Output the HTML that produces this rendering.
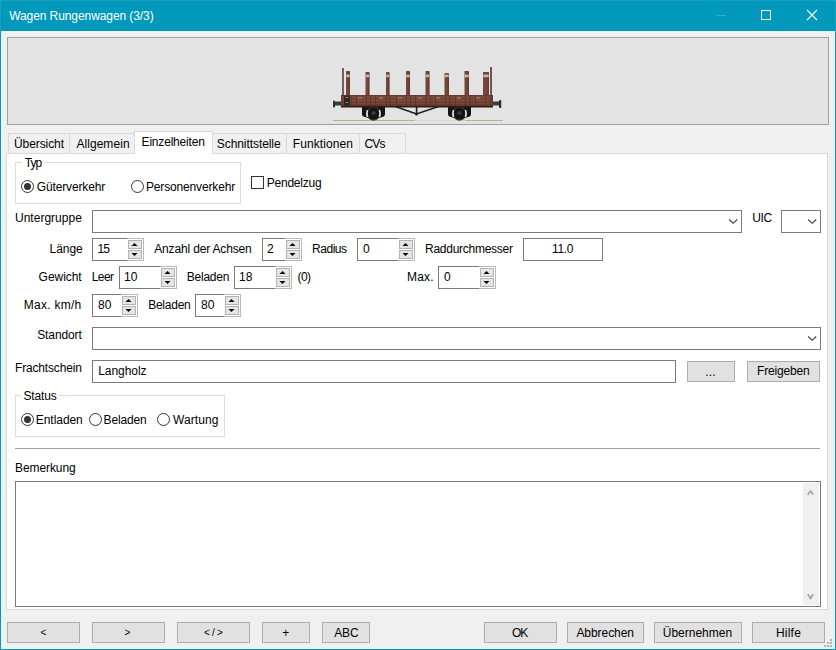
<!DOCTYPE html>
<html><head><meta charset="utf-8"><style>
html,body{margin:0;padding:0;width:836px;height:650px;overflow:hidden;background:#f0f0f0;}
</style></head><body>
<div style="position:absolute;left:0px;top:0px;width:836px;height:650px;background:#f0f0f0;"></div>
<div style="position:absolute;left:0px;top:0px;width:836px;height:31px;background:#0099bc;"></div>
<div style="position:absolute;left:0px;top:31px;width:1px;height:619px;background:#0099bc;"></div>
<div style="position:absolute;left:835px;top:31px;width:1px;height:619px;background:#0099bc;"></div>
<div style="position:absolute;left:0px;top:649px;width:836px;height:1px;background:#0099bc;"></div>
<div style="position:absolute;left:0px;top:0px;width:836px;height:1px;background:#17a0c0;"></div>
<div style="position:absolute;left:0px;top:0px;width:1px;height:31px;background:#17a0c0;"></div>
<div style="position:absolute;left:835px;top:0px;width:1px;height:31px;background:#17a0c0;"></div>
<div id="t0" style="position:absolute;top:9px;font:12px/14px 'Liberation Sans', sans-serif;color:#fff;white-space:nowrap;letter-spacing:-0.082px;left:9.2px;">Wagen Rungenwagen (3/3)</div>
<div style="position:absolute;left:716px;top:15px;width:10px;height:1px;background:#36accb;"></div>
<div style="position:absolute;left:761px;top:10px;width:10px;height:10px;box-sizing:border-box;border:1px solid #fff;"></div>
<svg style="position:absolute;left:806px;top:9px" width="12" height="12"><path d="M1,1 L11,11 M11,1 L1,11" stroke="#fff" stroke-width="1.1"/></svg>
<div style="position:absolute;left:7px;top:37px;width:822px;height:88px;box-sizing:border-box;background:#e3e3e3;border:1px solid #a0a0a0;"></div>
<svg style="position:absolute;left:0;top:0" width="836" height="130" viewBox="0 0 836 130"><rect x="333" y="120" width="170" height="1" fill="#c0b27e"/><rect x="415" y="120" width="50" height="1" fill="#dcd6c0"/><rect x="334" y="101.5" width="8" height="4" fill="#36403c"/><rect x="333" y="100.5" width="2" height="7" fill="#2c3431" rx="0.8"/><rect x="492" y="101.5" width="8" height="4" fill="#36403c"/><rect x="499" y="100" width="2.2" height="8" fill="#252c29" rx="0.8"/><path d="M362,106 H385 V114 Q385,116.5 382,117 L379,118 Q376.5,120.6 373.5,120.6 Q370.5,120.6 368,118 L365,117 Q362,116.5 362,114 Z" fill="#141414"/><circle cx="373.5" cy="113.5" r="6.6" fill="none" stroke="#5e5a50" stroke-width="0.7"/><path d="M367.5,110 Q366.3,113.5 367.5,117" fill="none" stroke="#e4e2ea" stroke-width="1.6"/><path d="M379.5,110 Q380.7,113.5 379.5,117" fill="none" stroke="#e4e2ea" stroke-width="1.6"/><rect x="371.5" y="111.5" width="4" height="3" fill="#3c3e42"/><path d="M448,106 H471 V114 Q471,116.5 468,117 L465,118 Q462.5,120.6 459.5,120.6 Q456.5,120.6 454,118 L451,117 Q448,116.5 448,114 Z" fill="#141414"/><circle cx="459.5" cy="113.5" r="6.6" fill="none" stroke="#5e5a50" stroke-width="0.7"/><path d="M453.5,110 Q452.3,113.5 453.5,117" fill="none" stroke="#e4e2ea" stroke-width="1.6"/><path d="M465.5,110 Q466.7,113.5 465.5,117" fill="none" stroke="#e4e2ea" stroke-width="1.6"/><rect x="457.5" y="111.5" width="4" height="3" fill="#3c3e42"/><polyline points="394,106 416.5,114 440,106" fill="none" stroke="#1c1c1c" stroke-width="1.4"/><rect x="415.8" y="106" width="1.6" height="8" fill="#1c1c1c"/><circle cx="416.5" cy="114" r="1.5" fill="#1c1c1c"/><rect x="341" y="105.5" width="152" height="2" fill="#2b1d18"/><rect x="341" y="95" width="152" height="11" fill="#784738"/><rect x="341" y="95" width="152" height="1" fill="#6a3c30"/><rect x="341" y="102" width="152" height="1" fill="#663a2e"/><rect x="341" y="104.5" width="152" height="1.2" fill="#5a3226"/><rect x="341.5" y="95" width="1" height="11" fill="#50302a" opacity="0.6"/><rect x="351" y="95" width="1" height="11" fill="#50302a" opacity="0.6"/><rect x="356" y="95" width="1" height="11" fill="#50302a" opacity="0.6"/><rect x="366" y="95" width="1" height="11" fill="#50302a" opacity="0.6"/><rect x="370" y="95" width="1" height="11" fill="#50302a" opacity="0.6"/><rect x="375" y="95" width="1" height="11" fill="#50302a" opacity="0.6"/><rect x="386" y="95" width="1" height="11" fill="#50302a" opacity="0.6"/><rect x="389.5" y="95" width="1" height="11" fill="#50302a" opacity="0.6"/><rect x="396" y="95" width="1" height="11" fill="#50302a" opacity="0.6"/><rect x="406" y="95" width="1" height="11" fill="#50302a" opacity="0.6"/><rect x="410" y="95" width="1" height="11" fill="#50302a" opacity="0.6"/><rect x="415" y="95" width="1" height="11" fill="#50302a" opacity="0.6"/><rect x="425.5" y="95" width="1" height="11" fill="#50302a" opacity="0.6"/><rect x="430" y="95" width="1" height="11" fill="#50302a" opacity="0.6"/><rect x="435" y="95" width="1" height="11" fill="#50302a" opacity="0.6"/><rect x="445" y="95" width="1" height="11" fill="#50302a" opacity="0.6"/><rect x="449.5" y="95" width="1" height="11" fill="#50302a" opacity="0.6"/><rect x="455" y="95" width="1" height="11" fill="#50302a" opacity="0.6"/><rect x="465" y="95" width="1" height="11" fill="#50302a" opacity="0.6"/><rect x="469.5" y="95" width="1" height="11" fill="#50302a" opacity="0.6"/><rect x="475" y="95" width="1" height="11" fill="#50302a" opacity="0.6"/><rect x="485" y="95" width="1" height="11" fill="#50302a" opacity="0.6"/><rect x="490" y="95" width="1" height="11" fill="#50302a" opacity="0.6"/><rect x="492" y="95" width="1" height="11" fill="#50302a" opacity="0.6"/><rect x="358" y="97" width="4" height="1.5" fill="#b8a098" opacity="0.5"/><rect x="379" y="97" width="4" height="1.5" fill="#b8a098" opacity="0.5"/><rect x="398" y="97" width="4" height="1.5" fill="#b8a098" opacity="0.5"/><rect x="418" y="97" width="4" height="1.5" fill="#b8a098" opacity="0.5"/><rect x="436" y="97" width="4" height="1.5" fill="#b8a098" opacity="0.5"/><rect x="457" y="97" width="4" height="1.5" fill="#b8a098" opacity="0.5"/><rect x="476" y="97" width="4" height="1.5" fill="#b8a098" opacity="0.5"/><rect x="344" y="95.5" width="6" height="10" fill="#2e2624"/><rect x="345.5" y="97" width="3" height="1" fill="#8a8a8a"/><rect x="345.5" y="102" width="3" height="1" fill="#7a7a7a"/><rect x="342" y="68" width="2" height="27" fill="#765e56"/><rect x="490" y="67" width="2" height="28" fill="#70564c"/><rect x="346" y="71" width="4" height="24" fill="#74453a" rx="0.6"/><rect x="348.8" y="72" width="1" height="23" fill="#5e362e" opacity="0.8"/><rect x="346.3" y="74.6" width="3.4" height="2.6" fill="#d2cccc" opacity="0.85"/><rect x="365.5" y="72" width="4" height="23" fill="#74453a" rx="0.6"/><rect x="368.3" y="73" width="1" height="22" fill="#5e362e" opacity="0.8"/><rect x="365.8" y="74.6" width="3.4" height="2.6" fill="#d2cccc" opacity="0.85"/><rect x="386" y="72" width="3.5" height="23" fill="#74453a" rx="0.6"/><rect x="388.3" y="73" width="1" height="22" fill="#5e362e" opacity="0.8"/><rect x="386.3" y="74.6" width="2.9" height="2.6" fill="#d2cccc" opacity="0.85"/><rect x="406" y="71" width="4" height="24" fill="#74453a" rx="0.6"/><rect x="408.8" y="72" width="1" height="23" fill="#5e362e" opacity="0.8"/><rect x="406.3" y="74.6" width="3.4" height="2.6" fill="#d2cccc" opacity="0.85"/><rect x="425.5" y="71" width="4" height="24" fill="#74453a" rx="0.6"/><rect x="428.3" y="72" width="1" height="23" fill="#5e362e" opacity="0.8"/><rect x="425.8" y="74.6" width="3.4" height="2.6" fill="#d2cccc" opacity="0.85"/><rect x="444.5" y="73" width="4.5" height="22" fill="#74453a" rx="0.6"/><rect x="447.8" y="74" width="1" height="21" fill="#5e362e" opacity="0.8"/><rect x="444.8" y="74.6" width="3.9" height="2.6" fill="#d2cccc" opacity="0.85"/><rect x="464.5" y="71" width="4.5" height="24" fill="#74453a" rx="0.6"/><rect x="467.8" y="72" width="1" height="23" fill="#5e362e" opacity="0.8"/><rect x="464.8" y="74.6" width="3.9" height="2.6" fill="#d2cccc" opacity="0.85"/><rect x="483" y="72" width="6" height="23" fill="#74453a" rx="0.6"/><rect x="487.8" y="73" width="1" height="22" fill="#5e362e" opacity="0.8"/><rect x="483.3" y="74.6" width="5.4" height="2.6" fill="#d2cccc" opacity="0.85"/></svg>
<div style="position:absolute;left:6px;top:153px;width:822px;height:457px;box-sizing:border-box;background:#fff;border:1px solid #d9d9d9;"></div>
<div style="position:absolute;left:8px;top:133px;width:62px;height:21px;box-sizing:border-box;background:#f0f0f0;border:1px solid #d9d9d9;"></div>
<div style="position:absolute;left:69px;top:133px;width:66px;height:21px;box-sizing:border-box;background:#f0f0f0;border:1px solid #d9d9d9;"></div>
<div style="position:absolute;left:212px;top:133px;width:75px;height:21px;box-sizing:border-box;background:#f0f0f0;border:1px solid #d9d9d9;"></div>
<div style="position:absolute;left:286px;top:133px;width:74px;height:21px;box-sizing:border-box;background:#f0f0f0;border:1px solid #d9d9d9;"></div>
<div style="position:absolute;left:359px;top:133px;width:47px;height:21px;box-sizing:border-box;background:#f0f0f0;border:1px solid #d9d9d9;"></div>
<div style="position:absolute;left:134px;top:131px;width:79px;height:23px;box-sizing:border-box;background:#fff;border:1px solid #d9d9d9;border-bottom:none;"></div>
<div id="t1" style="position:absolute;top:137px;font:12px/14px 'Liberation Sans', sans-serif;color:#000;white-space:nowrap;letter-spacing:-0.09px;left:14.0px;">Übersicht</div>
<div id="t2" style="position:absolute;top:137px;font:12px/14px 'Liberation Sans', sans-serif;color:#000;white-space:nowrap;letter-spacing:0.06px;left:76.4px;">Allgemein</div>
<div id="t3" style="position:absolute;top:135px;font:12px/14px 'Liberation Sans', sans-serif;color:#000;white-space:nowrap;letter-spacing:-0.195px;left:141.6px;">Einzelheiten</div>
<div id="t4" style="position:absolute;top:137px;font:12px/14px 'Liberation Sans', sans-serif;color:#000;white-space:nowrap;letter-spacing:-0.073px;left:216.8px;">Schnittstelle</div>
<div id="t5" style="position:absolute;top:137px;font:12px/14px 'Liberation Sans', sans-serif;color:#000;white-space:nowrap;letter-spacing:0.096px;left:292.8px;">Funktionen</div>
<div id="t6" style="position:absolute;top:137px;font:12px/14px 'Liberation Sans', sans-serif;color:#000;white-space:nowrap;letter-spacing:-0.92px;left:364.6px;">CVs</div>
<div style="position:absolute;left:15px;top:162px;width:226px;height:42px;box-sizing:border-box;border:1px solid #dcdcdc;"></div>
<div style="position:absolute;left:21.9px;top:161px;width:22.4px;height:3px;background:#fff;"></div>
<div id="t7" style="position:absolute;top:156px;font:12px/14px 'Liberation Sans', sans-serif;color:#000;white-space:nowrap;letter-spacing:-1.04px;left:24.8px;">Typ</div>
<svg style="position:absolute;left:21px;top:180px" width="13" height="13"><circle cx="6.5" cy="6.5" r="6" fill="#fff" stroke="#333" stroke-width="1"/><circle cx="6.5" cy="6.5" r="3.5" fill="#333"/></svg>
<div id="t8" style="position:absolute;top:180px;font:12px/14px 'Liberation Sans', sans-serif;color:#000;white-space:nowrap;letter-spacing:-0.144px;left:36.8px;">Güterverkehr</div>
<svg style="position:absolute;left:131px;top:180px" width="13" height="13"><circle cx="6.5" cy="6.5" r="6" fill="#fff" stroke="#333" stroke-width="1"/></svg>
<div id="t9" style="position:absolute;top:180px;font:12px/14px 'Liberation Sans', sans-serif;color:#000;white-space:nowrap;letter-spacing:-0.157px;left:146.0px;">Personenverkehr</div>
<div style="position:absolute;left:251px;top:176px;width:13px;height:13px;box-sizing:border-box;background:#fff;border:1px solid #333;"></div>
<div id="t10" style="position:absolute;top:176px;font:12px/14px 'Liberation Sans', sans-serif;color:#000;white-space:nowrap;letter-spacing:-0.24px;left:266.8px;">Pendelzug</div>
<div id="t11" style="position:absolute;top:211px;font:12px/14px 'Liberation Sans', sans-serif;color:#000;white-space:nowrap;letter-spacing:0.012px;left:15.0px;">Untergruppe</div>
<div style="position:absolute;left:92px;top:210px;width:650px;height:23px;box-sizing:border-box;background:#fff;border:1px solid #7a7a7a;"></div>
<svg style="position:absolute;left:727px;top:210px" width="14" height="23"><polyline points="2.2,9.5 6.2,13.3 10.2,9.5" fill="none" stroke="#3a3a3a" stroke-width="1.1"/></svg>
<div id="t12" style="position:absolute;top:211px;font:12px/14px 'Liberation Sans', sans-serif;color:#000;white-space:nowrap;letter-spacing:-0.32px;left:752.2px;">UIC</div>
<div style="position:absolute;left:781px;top:210px;width:40px;height:23px;box-sizing:border-box;background:#fff;border:1px solid #7a7a7a;"></div>
<svg style="position:absolute;left:806px;top:210px" width="14" height="23"><polyline points="2.2,9.5 6.2,13.3 10.2,9.5" fill="none" stroke="#3a3a3a" stroke-width="1.1"/></svg>
<div id="t13" style="position:absolute;top:242px;font:12px/14px 'Liberation Sans', sans-serif;color:#000;white-space:nowrap;letter-spacing:-0.08px;left:49.6px;">Länge</div>
<div style="position:absolute;left:92px;top:238px;width:52px;height:23px;box-sizing:border-box;background:#fff;border:1px solid #7a7a7a;"></div>
<div style="position:absolute;left:127px;top:238px;width:17px;height:23px;box-sizing:border-box;background:#fff;border:1px solid #b9b9b9;border-left:none;"></div>
<div style="position:absolute;left:128px;top:240px;width:14px;height:9px;box-sizing:border-box;background:#e5e5e5;border:1px solid #b3b3b3;"></div>
<div style="position:absolute;left:128px;top:250px;width:14px;height:9px;box-sizing:border-box;background:#e5e5e5;border:1px solid #b3b3b3;"></div>
<svg style="position:absolute;left:128px;top:238px" width="14" height="23"><polygon points="3.5,8 6.5,5 9.5,8" fill="#000"/><polygon points="3.5,15 6.5,18 9.5,15" fill="#000"/></svg>
<div id="t14" style="position:absolute;top:242px;font:12px/14px 'Liberation Sans', sans-serif;color:#000;white-space:nowrap;letter-spacing:-1.04px;left:97.6px;">15</div>
<div id="t15" style="position:absolute;top:242px;font:12px/14px 'Liberation Sans', sans-serif;color:#000;white-space:nowrap;letter-spacing:-0.155px;left:154.2px;">Anzahl der Achsen</div>
<div style="position:absolute;left:262px;top:238px;width:40px;height:23px;box-sizing:border-box;background:#fff;border:1px solid #7a7a7a;"></div>
<div style="position:absolute;left:285px;top:238px;width:17px;height:23px;box-sizing:border-box;background:#fff;border:1px solid #b9b9b9;border-left:none;"></div>
<div style="position:absolute;left:286px;top:240px;width:14px;height:9px;box-sizing:border-box;background:#e5e5e5;border:1px solid #b3b3b3;"></div>
<div style="position:absolute;left:286px;top:250px;width:14px;height:9px;box-sizing:border-box;background:#e5e5e5;border:1px solid #b3b3b3;"></div>
<svg style="position:absolute;left:286px;top:238px" width="14" height="23"><polygon points="3.5,8 6.5,5 9.5,8" fill="#000"/><polygon points="3.5,15 6.5,18 9.5,15" fill="#000"/></svg>
<div id="t16" style="position:absolute;top:242px;font:12px/14px 'Liberation Sans', sans-serif;color:#000;white-space:nowrap;left:267.0px;">2</div>
<div id="t17" style="position:absolute;top:242px;font:12px/14px 'Liberation Sans', sans-serif;color:#000;white-space:nowrap;letter-spacing:-0.452px;left:312.0px;">Radius</div>
<div style="position:absolute;left:357px;top:238px;width:58px;height:23px;box-sizing:border-box;background:#fff;border:1px solid #7a7a7a;"></div>
<div style="position:absolute;left:398px;top:238px;width:17px;height:23px;box-sizing:border-box;background:#fff;border:1px solid #b9b9b9;border-left:none;"></div>
<div style="position:absolute;left:399px;top:240px;width:14px;height:9px;box-sizing:border-box;background:#e5e5e5;border:1px solid #b3b3b3;"></div>
<div style="position:absolute;left:399px;top:250px;width:14px;height:9px;box-sizing:border-box;background:#e5e5e5;border:1px solid #b3b3b3;"></div>
<svg style="position:absolute;left:399px;top:238px" width="14" height="23"><polygon points="3.5,8 6.5,5 9.5,8" fill="#000"/><polygon points="3.5,15 6.5,18 9.5,15" fill="#000"/></svg>
<div id="t18" style="position:absolute;top:242px;font:12px/14px 'Liberation Sans', sans-serif;color:#000;white-space:nowrap;left:363.0px;">0</div>
<div id="t19" style="position:absolute;top:242px;font:12px/14px 'Liberation Sans', sans-serif;color:#000;white-space:nowrap;letter-spacing:-0.26px;left:425.0px;">Raddurchmesser</div>
<div style="position:absolute;left:523px;top:238px;width:80px;height:23px;box-sizing:border-box;background:#fff;border:1px solid #7a7a7a;"></div>
<div id="t20" style="position:absolute;top:242px;font:12px/14px 'Liberation Sans', sans-serif;color:#000;white-space:nowrap;letter-spacing:-0.367px;left:552.0px;">11.0</div>
<div id="t21" style="position:absolute;top:270px;font:12px/14px 'Liberation Sans', sans-serif;color:#000;white-space:nowrap;letter-spacing:-0.047px;left:38.6px;">Gewicht</div>
<div id="t22" style="position:absolute;top:270px;font:12px/14px 'Liberation Sans', sans-serif;color:#000;white-space:nowrap;letter-spacing:-0.633px;left:91.8px;">Leer</div>
<div style="position:absolute;left:119px;top:266px;width:58px;height:23px;box-sizing:border-box;background:#fff;border:1px solid #7a7a7a;"></div>
<div style="position:absolute;left:160px;top:266px;width:17px;height:23px;box-sizing:border-box;background:#fff;border:1px solid #b9b9b9;border-left:none;"></div>
<div style="position:absolute;left:161px;top:268px;width:14px;height:9px;box-sizing:border-box;background:#e5e5e5;border:1px solid #b3b3b3;"></div>
<div style="position:absolute;left:161px;top:278px;width:14px;height:9px;box-sizing:border-box;background:#e5e5e5;border:1px solid #b3b3b3;"></div>
<svg style="position:absolute;left:161px;top:266px" width="14" height="23"><polygon points="3.5,8 6.5,5 9.5,8" fill="#000"/><polygon points="3.5,15 6.5,18 9.5,15" fill="#000"/></svg>
<div id="t23" style="position:absolute;top:270px;font:12px/14px 'Liberation Sans', sans-serif;color:#000;white-space:nowrap;left:124.0px;">10</div>
<div id="t24" style="position:absolute;top:270px;font:12px/14px 'Liberation Sans', sans-serif;color:#000;white-space:nowrap;letter-spacing:-0.247px;left:186.8px;">Beladen</div>
<div style="position:absolute;left:234px;top:266px;width:58px;height:23px;box-sizing:border-box;background:#fff;border:1px solid #7a7a7a;"></div>
<div style="position:absolute;left:275px;top:266px;width:17px;height:23px;box-sizing:border-box;background:#fff;border:1px solid #b9b9b9;border-left:none;"></div>
<div style="position:absolute;left:276px;top:268px;width:14px;height:9px;box-sizing:border-box;background:#e5e5e5;border:1px solid #b3b3b3;"></div>
<div style="position:absolute;left:276px;top:278px;width:14px;height:9px;box-sizing:border-box;background:#e5e5e5;border:1px solid #b3b3b3;"></div>
<svg style="position:absolute;left:276px;top:266px" width="14" height="23"><polygon points="3.5,8 6.5,5 9.5,8" fill="#000"/><polygon points="3.5,15 6.5,18 9.5,15" fill="#000"/></svg>
<div id="t25" style="position:absolute;top:270px;font:12px/14px 'Liberation Sans', sans-serif;color:#000;white-space:nowrap;left:239.0px;">18</div>
<div id="t26" style="position:absolute;top:270px;font:12px/14px 'Liberation Sans', sans-serif;color:#000;white-space:nowrap;letter-spacing:-0.6px;left:297.6px;">(0)</div>
<div id="t27" style="position:absolute;top:270px;font:12px/14px 'Liberation Sans', sans-serif;color:#000;white-space:nowrap;letter-spacing:0.193px;left:407.0px;">Max.</div>
<div style="position:absolute;left:438px;top:266px;width:58px;height:23px;box-sizing:border-box;background:#fff;border:1px solid #7a7a7a;"></div>
<div style="position:absolute;left:479px;top:266px;width:17px;height:23px;box-sizing:border-box;background:#fff;border:1px solid #b9b9b9;border-left:none;"></div>
<div style="position:absolute;left:480px;top:268px;width:14px;height:9px;box-sizing:border-box;background:#e5e5e5;border:1px solid #b3b3b3;"></div>
<div style="position:absolute;left:480px;top:278px;width:14px;height:9px;box-sizing:border-box;background:#e5e5e5;border:1px solid #b3b3b3;"></div>
<svg style="position:absolute;left:480px;top:266px" width="14" height="23"><polygon points="3.5,8 6.5,5 9.5,8" fill="#000"/><polygon points="3.5,15 6.5,18 9.5,15" fill="#000"/></svg>
<div id="t28" style="position:absolute;top:270px;font:12px/14px 'Liberation Sans', sans-serif;color:#000;white-space:nowrap;left:444.0px;">0</div>
<div id="t29" style="position:absolute;top:298px;font:12px/14px 'Liberation Sans', sans-serif;color:#000;white-space:nowrap;letter-spacing:0.25px;left:23.8px;">Max. km/h</div>
<div style="position:absolute;left:92px;top:294px;width:46px;height:23px;box-sizing:border-box;background:#fff;border:1px solid #7a7a7a;"></div>
<div style="position:absolute;left:121px;top:294px;width:17px;height:23px;box-sizing:border-box;background:#fff;border:1px solid #b9b9b9;border-left:none;"></div>
<div style="position:absolute;left:122px;top:296px;width:14px;height:9px;box-sizing:border-box;background:#e5e5e5;border:1px solid #b3b3b3;"></div>
<div style="position:absolute;left:122px;top:306px;width:14px;height:9px;box-sizing:border-box;background:#e5e5e5;border:1px solid #b3b3b3;"></div>
<svg style="position:absolute;left:122px;top:294px" width="14" height="23"><polygon points="3.5,8 6.5,5 9.5,8" fill="#000"/><polygon points="3.5,15 6.5,18 9.5,15" fill="#000"/></svg>
<div id="t30" style="position:absolute;top:298px;font:12px/14px 'Liberation Sans', sans-serif;color:#000;white-space:nowrap;left:98.0px;">80</div>
<div id="t31" style="position:absolute;top:298px;font:12px/14px 'Liberation Sans', sans-serif;color:#000;white-space:nowrap;letter-spacing:-0.247px;left:148.2px;">Beladen</div>
<div style="position:absolute;left:195px;top:294px;width:46px;height:23px;box-sizing:border-box;background:#fff;border:1px solid #7a7a7a;"></div>
<div style="position:absolute;left:224px;top:294px;width:17px;height:23px;box-sizing:border-box;background:#fff;border:1px solid #b9b9b9;border-left:none;"></div>
<div style="position:absolute;left:225px;top:296px;width:14px;height:9px;box-sizing:border-box;background:#e5e5e5;border:1px solid #b3b3b3;"></div>
<div style="position:absolute;left:225px;top:306px;width:14px;height:9px;box-sizing:border-box;background:#e5e5e5;border:1px solid #b3b3b3;"></div>
<svg style="position:absolute;left:225px;top:294px" width="14" height="23"><polygon points="3.5,8 6.5,5 9.5,8" fill="#000"/><polygon points="3.5,15 6.5,18 9.5,15" fill="#000"/></svg>
<div id="t32" style="position:absolute;top:298px;font:12px/14px 'Liberation Sans', sans-serif;color:#000;white-space:nowrap;left:201.0px;">80</div>
<div id="t33" style="position:absolute;top:328px;font:12px/14px 'Liberation Sans', sans-serif;color:#000;white-space:nowrap;letter-spacing:-0.1px;left:37.2px;">Standort</div>
<div style="position:absolute;left:92px;top:327px;width:729px;height:23px;box-sizing:border-box;background:#fff;border:1px solid #7a7a7a;"></div>
<svg style="position:absolute;left:806px;top:327px" width="14" height="23"><polyline points="2.2,9.5 6.2,13.3 10.2,9.5" fill="none" stroke="#3a3a3a" stroke-width="1.1"/></svg>
<div id="t34" style="position:absolute;top:361px;font:12px/14px 'Liberation Sans', sans-serif;color:#000;white-space:nowrap;letter-spacing:-0.165px;left:15.0px;">Frachtschein</div>
<div style="position:absolute;left:92px;top:360px;width:584px;height:23px;box-sizing:border-box;background:#fff;border:1px solid #7a7a7a;"></div>
<div id="t35" style="position:absolute;top:364px;font:12px/14px 'Liberation Sans', sans-serif;color:#000;white-space:nowrap;letter-spacing:-0.054px;left:98.2px;">Langholz</div>
<div style="position:absolute;left:687px;top:361px;width:48px;height:21px;box-sizing:border-box;background:#e1e1e1;border:1px solid #adadad;"></div>
<div id="t36" style="position:absolute;top:365px;font:12px/14px 'Liberation Sans', sans-serif;color:#000;white-space:nowrap;letter-spacing:0.16px;left:705.2px;">...</div>
<div style="position:absolute;left:747px;top:361px;width:73px;height:21px;box-sizing:border-box;background:#e1e1e1;border:1px solid #adadad;"></div>
<div id="t37" style="position:absolute;top:364px;font:12px/14px 'Liberation Sans', sans-serif;color:#000;white-space:nowrap;letter-spacing:-0.17px;left:757.0px;">Freigeben</div>
<div style="position:absolute;left:15px;top:395px;width:210px;height:42px;box-sizing:border-box;border:1px solid #dcdcdc;"></div>
<div style="position:absolute;left:21.2px;top:394px;width:37.900000000000006px;height:3px;background:#fff;"></div>
<div id="t38" style="position:absolute;top:389px;font:12px/14px 'Liberation Sans', sans-serif;color:#000;white-space:nowrap;letter-spacing:-0.116px;left:23.4px;">Status</div>
<svg style="position:absolute;left:21px;top:413px" width="13" height="13"><circle cx="6.5" cy="6.5" r="6" fill="#fff" stroke="#333" stroke-width="1"/><circle cx="6.5" cy="6.5" r="3.5" fill="#333"/></svg>
<div id="t39" style="position:absolute;top:413px;font:12px/14px 'Liberation Sans', sans-serif;color:#000;white-space:nowrap;letter-spacing:-0.054px;left:35.8px;">Entladen</div>
<svg style="position:absolute;left:89px;top:413px" width="13" height="13"><circle cx="6.5" cy="6.5" r="6" fill="#fff" stroke="#333" stroke-width="1"/></svg>
<div id="t40" style="position:absolute;top:413px;font:12px/14px 'Liberation Sans', sans-serif;color:#000;white-space:nowrap;letter-spacing:-0.153px;left:103.6px;">Beladen</div>
<svg style="position:absolute;left:157px;top:413px" width="13" height="13"><circle cx="6.5" cy="6.5" r="6" fill="#fff" stroke="#333" stroke-width="1"/></svg>
<div id="t41" style="position:absolute;top:413px;font:12px/14px 'Liberation Sans', sans-serif;color:#000;white-space:nowrap;letter-spacing:0.1px;left:173.0px;">Wartung</div>
<div style="position:absolute;left:15px;top:448px;width:805px;height:1px;background:#a0a0a0;"></div>
<div id="t42" style="position:absolute;top:461px;font:12px/14px 'Liberation Sans', sans-serif;color:#000;white-space:nowrap;letter-spacing:-0.09px;left:15.0px;">Bemerkung</div>
<div style="position:absolute;left:15px;top:481px;width:806px;height:126px;box-sizing:border-box;background:#fff;border:1px solid #7a7a7a;"></div>
<div style="position:absolute;left:803px;top:483px;width:16px;height:122px;background:#f0f0f0;"></div>
<svg style="position:absolute;left:803px;top:483px" width="16" height="122"><polyline points="4.7,11.7 7.5,8.2 10.3,11.7" fill="none" stroke="#a6a6a6" stroke-width="1.8"/><polyline points="4.8,111.3 7.5,115.3 10.2,111.3" fill="none" stroke="#a6a6a6" stroke-width="1.8"/></svg>
<div style="position:absolute;left:7px;top:622px;width:73px;height:21px;box-sizing:border-box;background:#e1e1e1;border:1px solid #adadad;"></div>
<div id="t43" style="position:absolute;top:626px;font:10px/14px 'Liberation Sans', sans-serif;color:#000;white-space:nowrap;left:40.5px;">&lt;</div>
<div style="position:absolute;left:92px;top:622px;width:73px;height:21px;box-sizing:border-box;background:#e1e1e1;border:1px solid #adadad;"></div>
<div id="t44" style="position:absolute;top:626px;font:10px/14px 'Liberation Sans', sans-serif;color:#000;white-space:nowrap;left:124.5px;">&gt;</div>
<div style="position:absolute;left:177px;top:622px;width:73px;height:21px;box-sizing:border-box;background:#e1e1e1;border:1px solid #adadad;"></div>
<div id="t45" style="position:absolute;top:626px;font:10px/14px 'Liberation Sans', sans-serif;color:#000;white-space:nowrap;letter-spacing:2.2px;left:203.9px;">&lt;/&gt;</div>
<div style="position:absolute;left:262px;top:622px;width:48px;height:21px;box-sizing:border-box;background:#e1e1e1;border:1px solid #adadad;"></div>
<div id="t46" style="position:absolute;top:626px;font:12px/14px 'Liberation Sans', sans-serif;color:#000;white-space:nowrap;left:282.2px;">+</div>
<div style="position:absolute;left:322px;top:622px;width:48px;height:21px;box-sizing:border-box;background:#e1e1e1;border:1px solid #adadad;"></div>
<div id="t47" style="position:absolute;top:626px;font:12px/14px 'Liberation Sans', sans-serif;color:#000;white-space:nowrap;letter-spacing:-0.16px;left:334.2px;">ABC</div>
<div style="position:absolute;left:484px;top:622px;width:73px;height:21px;box-sizing:border-box;background:#e1e1e1;border:1px solid #adadad;"></div>
<div id="t48" style="position:absolute;top:626px;font:12px/14px 'Liberation Sans', sans-serif;color:#000;white-space:nowrap;letter-spacing:-1.04px;left:512.0px;">OK</div>
<div style="position:absolute;left:567px;top:622px;width:77px;height:21px;box-sizing:border-box;background:#e1e1e1;border:1px solid #adadad;"></div>
<div id="t49" style="position:absolute;top:626px;font:12px/14px 'Liberation Sans', sans-serif;color:#000;white-space:nowrap;letter-spacing:-0.05px;left:576.4px;">Abbrechen</div>
<div style="position:absolute;left:654px;top:622px;width:88px;height:21px;box-sizing:border-box;background:#e1e1e1;border:1px solid #adadad;"></div>
<div id="t50" style="position:absolute;top:626px;font:12px/14px 'Liberation Sans', sans-serif;color:#000;white-space:nowrap;letter-spacing:-0.011px;left:662.8px;">Übernehmen</div>
<div style="position:absolute;left:752px;top:622px;width:73px;height:21px;box-sizing:border-box;background:#e1e1e1;border:1px solid #adadad;"></div>
<div id="t51" style="position:absolute;top:626px;font:12px/14px 'Liberation Sans', sans-serif;color:#000;white-space:nowrap;letter-spacing:0.2px;left:776.0px;">Hilfe</div>
<div style="position:absolute;left:830px;top:639px;width:2px;height:2px;background:#b4b4b4;"></div>
<div style="position:absolute;left:827px;top:642px;width:2px;height:2px;background:#b4b4b4;"></div>
<div style="position:absolute;left:830px;top:642px;width:2px;height:2px;background:#b4b4b4;"></div>
<div style="position:absolute;left:824px;top:645px;width:2px;height:2px;background:#b4b4b4;"></div>
<div style="position:absolute;left:827px;top:645px;width:2px;height:2px;background:#b4b4b4;"></div>
<div style="position:absolute;left:830px;top:645px;width:2px;height:2px;background:#b4b4b4;"></div>
</body></html>
